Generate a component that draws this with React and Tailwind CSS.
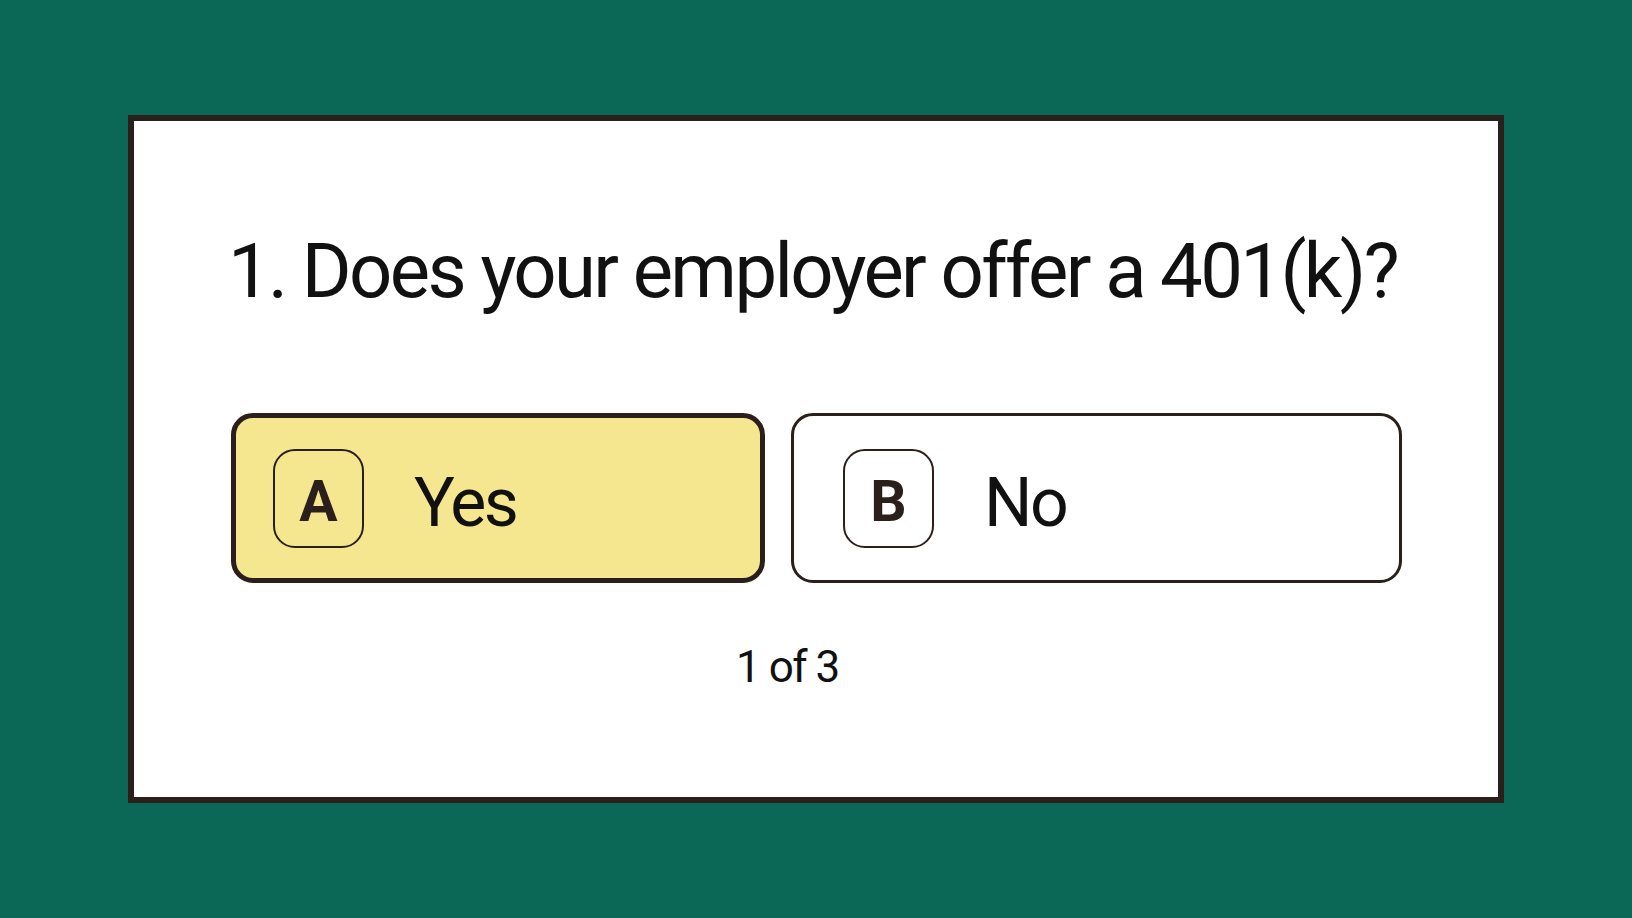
export default function App() {
  const font = { fontFamily: 'Roboto, "Liberation Sans", sans-serif' };

  return (
    <div className="w-[1632px] h-[918px] bg-[#0b6756] flex items-start pt-[115px] pl-[128px]" style={font}>
      <div className="w-[1376px] h-[688px] bg-white border-[6px] border-[#2a1f1a] flex flex-col">
        {/* Question */}
        <h1 className="pt-[112px] pl-[94px] text-[76px] leading-none font-normal text-[#111111] tracking-[-2.6px] whitespace-nowrap">
          1. Does your employer offer a 401(k)?
        </h1>

        {/* Options */}
        <div className="flex gap-[26px] pl-[97px] mt-[104px]">
          <button className="w-[534px] h-[170px] rounded-[22px] border-[5px] border-[#2a1f1a] bg-[#f5e690] flex items-center pl-[37px] text-left">
            <span className="w-[91px] h-[99px] rounded-[22px] border-2 border-[#2a1f1a] flex items-center justify-center pt-[8px] text-[57px] font-bold text-[#2a1f1a]">
              A
            </span>
            <span className="ml-[50px] pt-[10px] text-[68px] tracking-[-2.5px] text-[#111111]">Yes</span>
          </button>
          <button className="w-[611px] h-[170px] rounded-[22px] border-[3px] border-[#2a1f1a] bg-white flex items-center pl-[49px] text-left">
            <span className="w-[91px] h-[99px] rounded-[22px] border-2 border-[#2a1f1a] flex items-center justify-center pt-[8px] text-[57px] font-bold text-[#2a1f1a]">
              B
            </span>
            <span className="ml-[50px] pt-[10px] text-[68px] tracking-[-2.5px] text-[#111111]">No</span>
          </button>
        </div>

        {/* Progress */}
        <div className="pl-[602px] mt-[62px] text-[44px] leading-none tracking-[-1.5px] text-[#111111]">1 of 3</div>
      </div>
    </div>
  );
}
